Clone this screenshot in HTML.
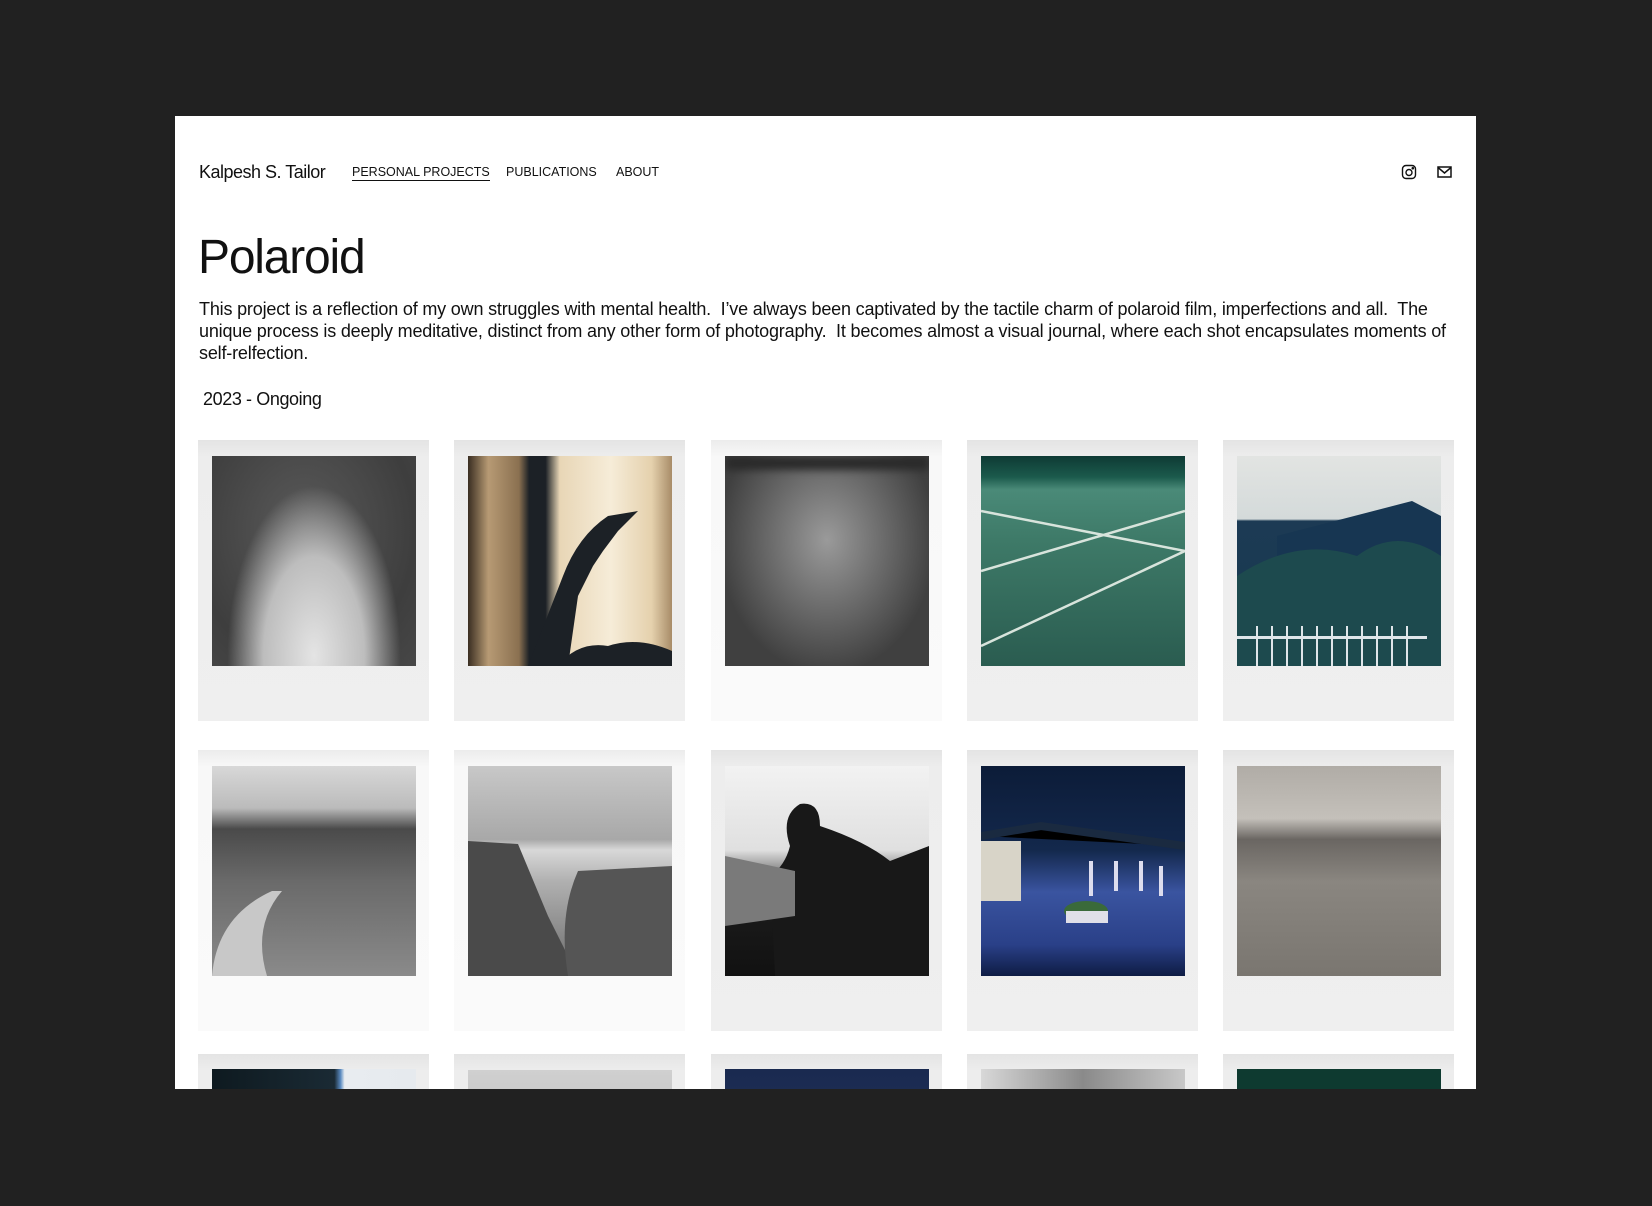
<!DOCTYPE html>
<html><head><meta charset="utf-8"><style>
*{margin:0;padding:0;box-sizing:border-box}
html,body{width:1652px;height:1206px;overflow:hidden;background:#212121;font-family:"Liberation Sans",sans-serif;color:#111}
#panel{position:absolute;left:175px;top:116px;width:1301px;height:973px;background:#fff;overflow:hidden}
.brand{position:absolute;left:24px;top:46px;font-size:18px;letter-spacing:-0.5px;color:#111}
.nav{position:absolute;top:49px;font-size:12.5px;letter-spacing:0;color:#111;white-space:nowrap}
.nav.u{border-bottom:1px solid #111;padding-bottom:1px}
h1{position:absolute;left:23px;top:114px;font-size:48px;font-weight:400;letter-spacing:-1.2px}
.p{position:absolute;left:24px;top:182px;font-size:18px;line-height:22px;letter-spacing:-0.18px;white-space:nowrap}
.yr{position:absolute;left:28px;top:273px;font-size:18px;letter-spacing:-0.4px}
.card{position:absolute;width:231px;height:281px;background:linear-gradient(#e4e4e4,#ededed 6%,#efefef);}
.card.w{background:linear-gradient(#ececec,#f8f8f8 6%,#fafafa)}
.img{position:absolute;left:14px;top:16px;width:204px;height:210px;overflow:hidden}
</style></head><body>
<div id="panel">
<div class="brand">Kalpesh S. Tailor</div>
<div class="nav u" style="left:177px">PERSONAL PROJECTS</div>
<div class="nav" style="left:331px">PUBLICATIONS</div>
<div class="nav" style="left:441px">ABOUT</div>
<svg style="position:absolute;left:1226px;top:48px" width="16" height="16" viewBox="0 0 16 16" fill="none" stroke="#111" stroke-width="1.4"><rect x="1.5" y="1.5" width="13" height="13" rx="3.5"/><circle cx="8" cy="8.5" r="3"/><circle cx="11.8" cy="4.2" r=".6" fill="#111"/></svg>
<svg style="position:absolute;left:1262px;top:50px" width="15" height="12" viewBox="0 0 15 12" fill="none" stroke="#111" stroke-width="1.5"><rect x="1" y="1" width="13" height="10"/><path d="M1 1.5 L7.5 7 L14 1.5"/></svg>
<h1>Polaroid</h1>
<div class="p">This project is a reflection of my own struggles with mental health.&nbsp; I’ve always been captivated by the tactile charm of polaroid film, imperfections and all.&nbsp; The<br>unique process is deeply meditative, distinct from any other form of photography.&nbsp; It becomes almost a visual journal, where each shot encapsulates moments of<br>self-relfection.</div>
<div class="yr">2023 - Ongoing</div>

<!-- row 1 -->
<div class="card" style="left:23px;top:324px"><div class="img" style="background:radial-gradient(ellipse at 50% 95%,#e4e4e4 0,#bdbdbd 35%,transparent 60%),radial-gradient(ellipse at 45% 35%,#5a5a5a,#3e3e3e 70%,#474747)"></div></div>
<div class="card" style="left:279px;top:324px"><div class="img" style="background:linear-gradient(90deg,#3a2e22 0,#b79a74 10%,#8a7050 25%,#1c2126 30%,#1c2126 38%,#e8d6b6 45%,#f6ecd8 70%,#e5d1ad 90%,#a88c68)"><svg width="204" height="210" style="position:absolute;left:0;top:0"><path d="M60 210 L95 120 Q110 80 140 60 L170 55 L150 75 L135 95 L125 110 L110 140 L100 210Z" fill="#1c2126"/><path d="M90 210 Q110 185 140 190 Q170 180 204 195 L204 210Z" fill="#1c2126"/></svg></div></div>
<div class="card w" style="left:536px;top:324px"><div class="img" style="background:radial-gradient(ellipse at 50% 40%,#9a9a9a,#6a6a6a 40%,#404040 75%),#555"><div style="position:absolute;left:0;top:0;width:204px;height:14px;background:#2a2a2a;filter:blur(4px)"></div></div></div>
<div class="card" style="left:792px;top:324px"><div class="img" style="background:linear-gradient(#0e3a34 0,#1b5a4c 10%,#4a8a78 16%,#3e7a68 40%,#2a5c50 100%)"><svg width="204" height="210" style="position:absolute;left:0;top:0"><path d="M0 55 L204 95 M0 115 L204 55 M0 190 L204 95" stroke="#d8e4dc" stroke-width="2.5"/></svg></div></div>
<div class="card" style="left:1048px;top:324px"><div class="img" style="background:linear-gradient(#e2e4e2 0,#d4dada 30%,#1c3a54 31%,#1a3a52 60%,#1f4a5a 100%)"><svg width="204" height="210" style="position:absolute;left:0;top:0"><path d="M40 80 L175 45 L204 60 L204 210 L40 210Z" fill="#173652"/><path d="M0 120 Q60 80 120 100 Q160 70 204 100 L204 210 L0 210Z" fill="#1d4a4e"/><rect x="0" y="180" width="190" height="3" fill="#dfe6ea"/><path d="M20 170v40M35 170v40M50 170v40M65 170v40M80 170v40M95 170v40M110 170v40M125 170v40M140 170v40M155 170v40M170 170v40" stroke="#dfe6ea" stroke-width="2"/></svg></div></div>

<!-- row 2 -->
<div class="card w" style="left:23px;top:634px"><div class="img" style="background:linear-gradient(#d8d8d8 0,#bbb 20%,#4a4a4a 30%,#6a6a6a 55%,#8a8a8a 100%)"><svg width="204" height="210" style="position:absolute;left:0;top:0"><path d="M0 210 Q5 150 60 125 L70 125 Q40 160 55 210Z" fill="#c8c8c8"/></svg></div></div>
<div class="card w" style="left:279px;top:634px"><div class="img" style="background:linear-gradient(#c8c8c8 0,#a8a8a8 35%,#d8d8d8 40%,#b0b0b0 55%,#6a6a6a 100%)"><svg width="204" height="210" style="position:absolute;left:0;top:0"><path d="M0 75 L50 78 L80 150 L110 210 L0 210Z" fill="#4a4a4a"/><path d="M110 105 L204 100 L204 210 L100 210 Q90 150 110 105Z" fill="#555"/></svg></div></div>
<div class="card" style="left:536px;top:634px"><div class="img" style="background:linear-gradient(#f2f2f2 0,#e0e0e0 40%,#5a5a5a 55%,#1a1a1a 70%,#111)"><svg width="204" height="210" style="position:absolute;left:0;top:0"><path d="M50 210 L45 110 Q60 100 65 80 Q55 50 75 38 Q95 35 95 60 Q140 75 165 95 L204 80 L204 210Z" fill="#181818"/><path d="M0 90 L70 105 L70 150 L0 160Z" fill="#7a7a7a"/></svg></div></div>
<div class="card" style="left:792px;top:634px"><div class="img" style="background:linear-gradient(#0c1c38 0,#13284c 40%,#3a54a0 60%,#2a4088 85%,#0e1c44)"><svg width="204" height="210" style="position:absolute;left:0;top:0"><path d="M0 70 L60 60 L204 80" stroke="#1a2a40" stroke-width="8"/><rect x="0" y="75" width="40" height="60" fill="#d8d4c8"/><ellipse cx="105" cy="145" rx="22" ry="10" fill="#3a6a3a"/><rect x="85" y="145" width="42" height="12" fill="#e0e0e8"/><path d="M110 95v35M135 95v30M160 95v30M180 100v30" stroke="#dde" stroke-width="4"/></svg></div></div>
<div class="card" style="left:1048px;top:634px"><div class="img" style="background:linear-gradient(#b0aca6 0,#c4c0ba 25%,#6a6662 35%,#8a8680 55%,#7a7670 100%)"></div></div>

<!-- row 3 -->
<div class="card" style="left:23px;top:938px"><div class="img" style="top:15px;background:linear-gradient(90deg,#0e1a20 0,#1a2a34 60%,#5a8ac0 63%,#e8ecf0 65%,#e6eaee)"></div></div>
<div class="card" style="left:279px;top:938px"><div class="img" style="top:16px;background:linear-gradient(#d0d0d0,#9a9a9a)"></div></div>
<div class="card" style="left:536px;top:938px"><div class="img" style="top:15px;background:linear-gradient(#1a2a50,#2a3a68)"></div></div>
<div class="card" style="left:792px;top:938px"><div class="img" style="top:15px;background:linear-gradient(90deg,#d8d8d8,#8a8a8a 50%,#c8c8c8)"></div></div>
<div class="card" style="left:1048px;top:938px"><div class="img" style="top:15px;background:#0e3a30"></div></div>
</div>
</body></html>
